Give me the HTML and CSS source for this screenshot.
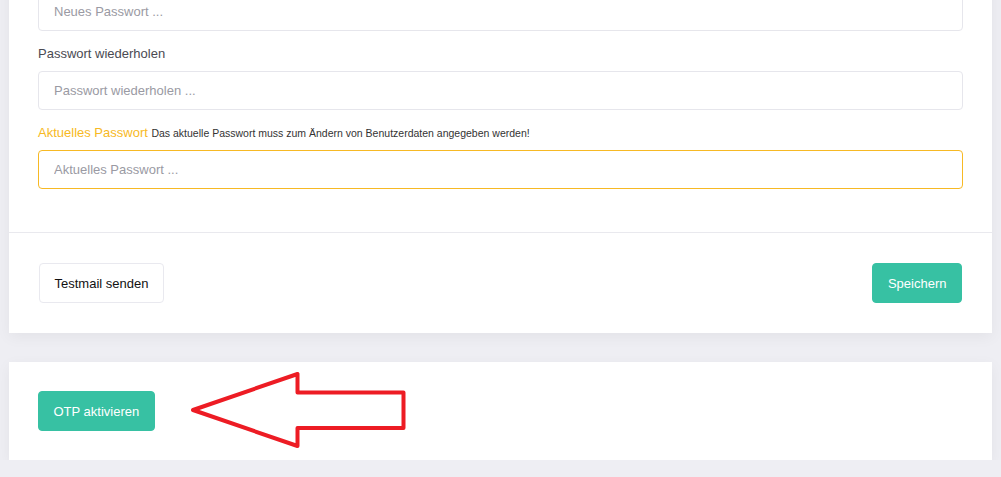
FILE: index.html
```html
<!DOCTYPE html>
<html lang="de">
<head>
<meta charset="utf-8">
<title>Benutzerdaten</title>
<link rel="stylesheet" href="styles.css">
</head>
<body>
<div class="page">
  <div class="card">
    <div class="card-body">
      <div class="form-group">
        <label class="label">Neues Passwort</label>
        <input class="input" type="password" placeholder="Neues Passwort ...">
      </div>
      <div class="form-group">
        <label class="label">Passwort wiederholen</label>
        <input class="input" type="password" placeholder="Passwort wiederholen ...">
      </div>
      <div class="form-group">
        <label class="label label-warning">Aktuelles Passwort <small class="hint">Das aktuelle Passwort muss zum Ändern von Benutzerdaten angegeben werden!</small></label>
        <input class="input input-warning" type="password" placeholder="Aktuelles Passwort ...">
      </div>
    </div>
    <div class="card-footer">
      <button class="btn btn-light">Testmail senden</button>
      <button class="btn btn-success">Speichern</button>
    </div>
  </div>

  <div class="card card-otp">
    <div class="card-body-otp">
      <button class="btn btn-success">OTP aktivieren</button>
    </div>
    <svg class="arrow" width="230" height="90" viewBox="0 0 230 90">
      <polygon points="13,45 117.5,9 117.5,27.5 223.5,27.5 223.5,63 117.5,63 117.5,81" fill="none" stroke="#ed1c24" stroke-width="4" stroke-linejoin="round"/>
    </svg>
  </div>
</div>
</body>
</html>
```

FILE: styles.css
```css
* { box-sizing: border-box; }

html, body {
  margin: 0;
  padding: 0;
  background: #eeeef3;
  font-family: "Liberation Sans", Arial, sans-serif;
  font-size: 13px;
  color: #495057;
}

.page {
  margin-top: -64px;
  padding: 0 9px;
  display: flex;
  flex-direction: column;
  gap: 29px;
}

.card {
  background: #fff;
  box-shadow: 0 4px 14px rgba(4, 9, 20, 0.05);
}

.card-body {
  padding: 29px 29px 30px;
}

.form-group {
  margin-bottom: 13px;
  display: flex;
  flex-direction: column;
}

.label {
  display: block;
  height: 20px;
  line-height: 20px;
  margin-bottom: 7px;
  color: #4a4a52;
  font-size: 13px;
}

.label-warning {
  color: #f7b924;
}

.hint {
  font-size: 10.5px;
  color: #333;
}

.input {
  display: block;
  width: 100%;
  height: 39px;
  padding: 0 15px;
  border: 1px solid #e6e6ec;
  border-radius: 4px;
  font-family: inherit;
  font-size: 13px;
  color: #495057;
  background: #fff;
}

.input::placeholder {
  color: #9a9aa3;
}

.input-warning {
  border-color: #f7b924;
}

.card-footer {
  border-top: 1px solid #e9e9ee;
  padding: 30px;
  display: flex;
  justify-content: space-between;
  align-items: center;
}

.btn {
  height: 40px;
  padding: 0 14.5px;
  border-radius: 4px;
  font-family: inherit;
  font-size: 13px;
  cursor: pointer;
}

.btn-light {
  background: #fff;
  border: 1px solid #e9e9ef;
  color: #111;
}

.btn-success {
  background: #37c1a3;
  border: 1px solid #37c1a3;
  color: #fff;
}

.card-otp {
  position: relative;
}

.card-body-otp {
  padding: 29px;
}

.arrow {
  position: absolute;
  left: 171px;
  top: 3px;
}
```
